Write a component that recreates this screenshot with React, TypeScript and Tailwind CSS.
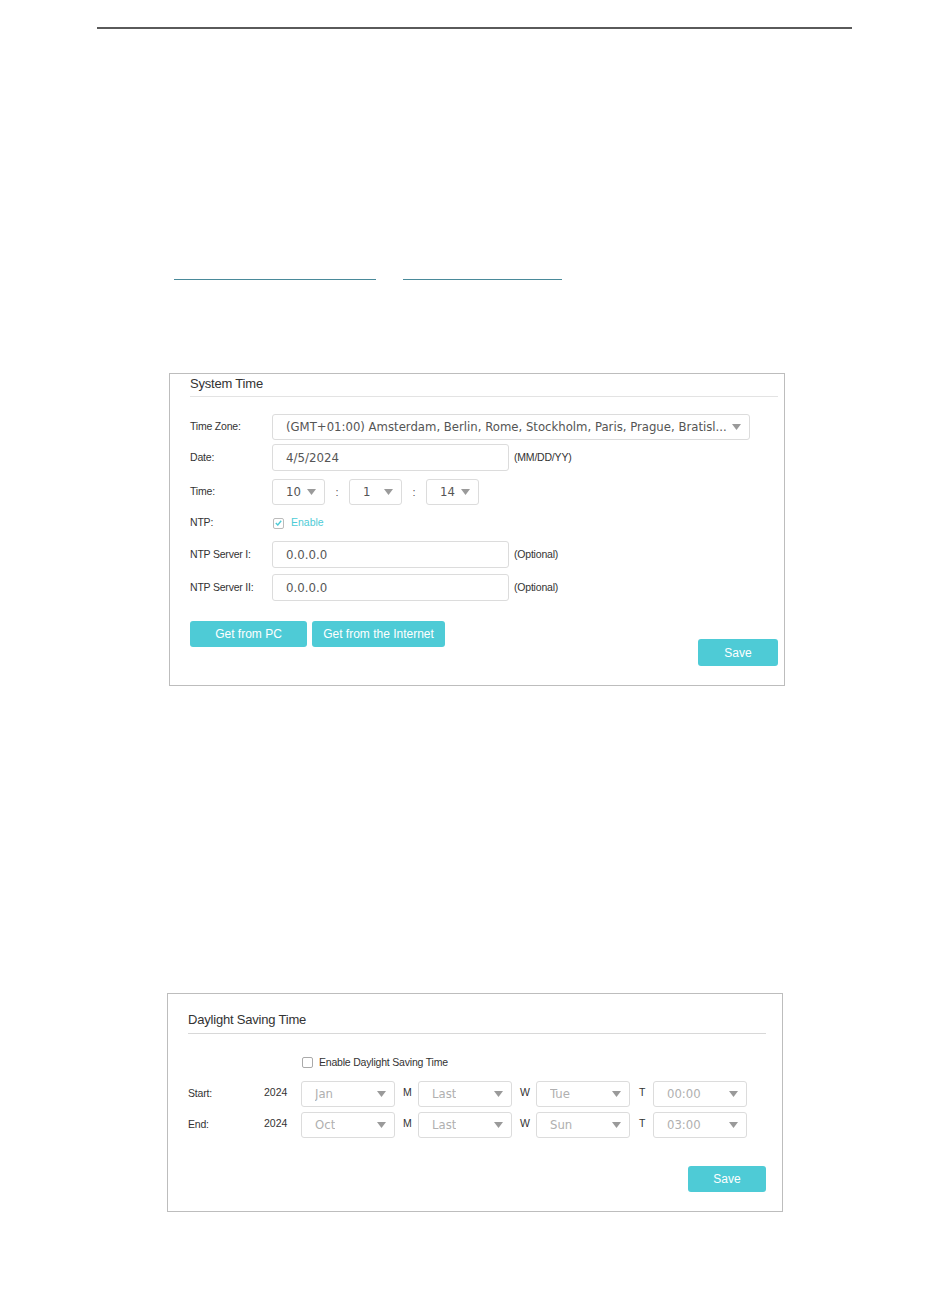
import React from 'react';

const Arrow = () => (
  <svg width="9" height="6" viewBox="0 0 9 6" className="shrink-0">
    <path d="M0 0 H9 L4.5 6 Z" fill="#9a9a9a" />
  </svg>
);

const Select = ({ value, className = '', dim = false }: { value: string; className?: string; dim?: boolean }) => (
  <div
    className={`flex items-center justify-between border border-[#dcdcdc] rounded-[3px] bg-white pl-[13px] pr-[8px] ${className}`}
  >
    <span
      className={`font-['DejaVu_Sans',sans-serif] text-[11.7px] truncate pt-[2px] ${dim ? 'text-[#b0b0b0]' : 'text-[#555]'}`}
    >
      {value}
    </span>
    <Arrow />
  </div>
);

const Input = ({ value }: { value: string }) => (
  <div className="flex items-center w-[237px] h-[27px] border border-[#dcdcdc] rounded-[3px] pl-[13px] pt-[2px] font-['DejaVu_Sans',sans-serif] text-[11.8px] text-[#555]">
    {value}
  </div>
);

const Label = ({ children, w = 'w-[82px]' }: { children: React.ReactNode; w?: string }) => (
  <span className={`${w} shrink-0 text-[10.5px] text-[#333] tracking-[-0.2px]`}>{children}</span>
);

const Note = ({ children }: { children: React.ReactNode }) => (
  <span className="ml-[5px] text-[10.5px] text-[#333] tracking-[-0.2px]">{children}</span>
);

const Btn = ({ children, className = '' }: { children: React.ReactNode; className?: string }) => (
  <button className={`bg-[#4ecbd6] text-white text-[12px] rounded-[3px] ${className}`}>{children}</button>
);

const SystemTime = () => (
  <div className="ml-[169px] mt-[93px] w-[616px] h-[313px] border border-[#bdbdbd] pl-[20px] pr-[6px] font-['Liberation_Sans',Arial,sans-serif]">
    <div className="h-[23px] border-b border-[#e3e3e3] text-[13px] text-[#333] tracking-[-0.2px]">
      System Time
    </div>

    <div className="flex items-center mt-[17px]">
      <Label>Time Zone:</Label>
      <Select
        className="w-[478px] h-[26px]"
        value="(GMT+01:00) Amsterdam, Berlin, Rome, Stockholm, Paris, Prague, Bratisl..."
      />
    </div>

    <div className="flex items-center mt-[4px]">
      <Label>Date:</Label>
      <Input value="4/5/2024" />
      <Note>(MM/DD/YY)</Note>
    </div>

    <div className="flex items-center mt-[8px]">
      <Label>Time:</Label>
      <Select className="w-[53px] h-[26px]" value="10" />
      <span className="w-[24px] text-center text-[11px] text-[#555]">:</span>
      <Select className="w-[53px] h-[26px]" value="1" />
      <span className="w-[24px] text-center text-[11px] text-[#555]">:</span>
      <Select className="w-[53px] h-[26px]" value="14" />
    </div>

    <div className="flex items-center h-[24px] mt-[6px]">
      <Label>NTP:</Label>
      <span className="flex items-center justify-center w-[11px] h-[11px] border border-[#bbb] rounded-[2px] ml-[1px]">
        <svg width="7" height="6" viewBox="0 0 7 6">
          <path d="M0.8 3 L2.8 5 L6.2 0.8" stroke="#4ecbd6" strokeWidth="1.4" fill="none" />
        </svg>
      </span>
      <span className="ml-[7px] text-[10.5px] text-[#4ecbd6]">Enable</span>
    </div>

    <div className="flex items-center mt-[6px]">
      <Label>NTP Server I:</Label>
      <Input value="0.0.0.0" />
      <Note>(Optional)</Note>
    </div>

    <div className="flex items-center mt-[6px]">
      <Label>NTP Server II:</Label>
      <Input value="0.0.0.0" />
      <Note>(Optional)</Note>
    </div>

    <div className="flex items-start mt-[20px]">
      <Btn className="w-[117px] h-[26px]">Get from PC</Btn>
      <Btn className="w-[133px] h-[26px] ml-[5px]">Get from the Internet</Btn>
      <Btn className="w-[80px] h-[27px] ml-auto mt-[18px] text-[12.5px]">Save</Btn>
    </div>
  </div>
);

const DstRow = ({ label, m, w, d, t }: { label: string; m: string; w: string; d: string; t: string }) => (
  <div className="flex items-center h-[26px]">
    <span className="w-[76px] text-[10.5px] text-[#333] tracking-[-0.2px] self-start mt-[5px]">{label}</span>
    <span className="w-[37px] text-[10.5px] text-[#333] self-start mt-[4px]">2024</span>
    <Select dim className="w-[94px] h-[26px]" value={m} />
    <span className="w-[23px] pl-[8px] text-[10.5px] text-[#333] self-start mt-[4px]">M</span>
    <Select dim className="w-[94px] h-[26px]" value={w} />
    <span className="w-[24px] pl-[8px] text-[10.5px] text-[#333] self-start mt-[4px]">W</span>
    <Select dim className="w-[94px] h-[26px]" value={d} />
    <span className="w-[23px] pl-[9px] text-[10.5px] text-[#333] self-start mt-[4px]">T</span>
    <Select dim className="w-[94px] h-[26px]" value={t} />
  </div>
);

const Daylight = () => (
  <div className="ml-[167px] mt-[307px] w-[616px] h-[219px] border border-[#bdbdbd] pl-[20px] pr-[16px] font-['Liberation_Sans',Arial,sans-serif]">
    <div className="pt-[16px] h-[40px] border-b border-[#d8d8d8] text-[13px] text-[#333] tracking-[-0.2px]">
      Daylight Saving Time
    </div>

    <div className="flex items-center mt-[21px] ml-[114px]">
      <span className="w-[11px] h-[11px] border border-[#aaa] rounded-[2px]" />
      <span className="ml-[6px] text-[10.5px] text-[#333] tracking-[-0.2px]">Enable Daylight Saving Time</span>
    </div>

    <div className="mt-[10px] flex flex-col gap-[5px]">
      <DstRow label="Start:" m="Jan" w="Last" d="Tue" t="00:00" />
      <DstRow label="End:" m="Oct" w="Last" d="Sun" t="03:00" />
    </div>

    <div className="flex justify-end mt-[28px]">
      <Btn className="w-[78px] h-[26px] text-[12.5px]">Save</Btn>
    </div>
  </div>
);

export default function App() {
  return (
    <div className="w-[950px] h-[1290px] bg-white overflow-hidden">
      <div className="pt-[27px]">
        <div className="ml-[97px] w-[755px] h-[2px] bg-[#5a5a5a]" />
      </div>
      <div className="flex mt-[250px]">
        <div className="ml-[174px] w-[202px] h-[1px] bg-[#4a8a9a]" />
        <div className="ml-[27px] w-[159px] h-[1px] bg-[#4a8a9a]" />
      </div>
      <SystemTime />
      <Daylight />
    </div>
  );
}
